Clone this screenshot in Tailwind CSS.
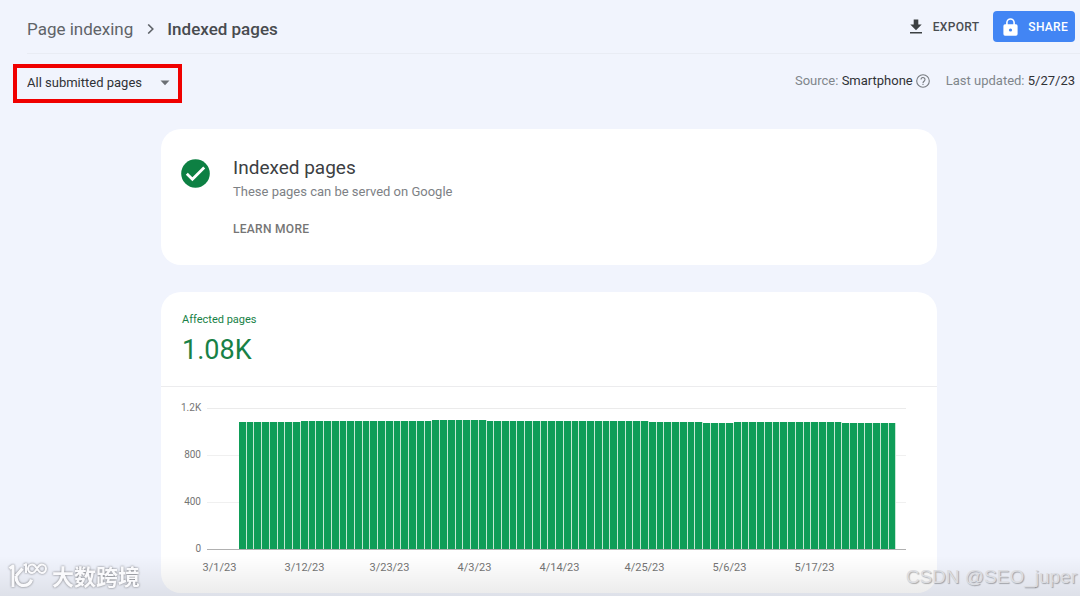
<!DOCTYPE html>
<html lang="en">
<head>
    <meta charset="UTF-8">
    <meta name="viewport" content="width=device-width, initial-scale=1.0">
    <title>Page indexing - Indexed pages</title>
    <script src="https://cdn.jsdelivr.net/npm/@tailwindcss/browser@4"></script>
</head>
<body class="relative min-h-screen overflow-x-hidden bg-[#f1f4fd] font-[Roboto,sans-serif] text-[#3c4043]">

    <!-- Header -->
    <header class="flex items-center justify-between h-[54px] ml-[27px] border-b border-[#e9ecf4] pr-[5px]">
        <nav aria-label="Breadcrumb" class="flex items-center pt-1 text-[17px] leading-6">
            <a href="#" class="text-[#5f6368]">Page indexing</a>
            <svg class="w-[10px] h-[10px] mx-3" viewBox="0 0 10 10" fill="none" stroke="#5f6368" stroke-width="1.6" aria-hidden="true"><path d="M3.200 0.5 7.800 5 3.200 9.5"/></svg>
            <span class="font-medium text-[#484b4f]">Indexed pages</span>
        </nav>

        <div class="flex items-center text-[12px] font-medium tracking-wide">
            <button type="button" class="flex items-center gap-[10px] mr-[14px] text-[#4a4d51]">
                <svg class="w-[14px] h-4" viewBox="0 0 13 16" fill="#3c4043" aria-hidden="true"><path d="M4.2 0.5h4.6v5h3.4L6.5 11.2 0.8 5.5h3.4zM0.5 13h12v1.6H0.5z"/></svg>
                EXPORT
            </button>
            <button type="button" class="flex items-center gap-[10px] h-[31px] pl-[10px] pr-[7px] text-white bg-[#4285f4] rounded-sm">
                <svg class="w-[15px] h-[18px]" viewBox="0 0 15 18" aria-hidden="true">
                    <path d="M3.9 7.5V4.6a3.6 3.6 0 0 1 7.2 0v2.9" fill="none" stroke="#fff" stroke-width="1.6"/>
                    <path d="M2 6.3h11a1.6 1.6 0 0 1 1.6 1.6v8.2a1.6 1.6 0 0 1-1.6 1.6H2a1.6 1.6 0 0 1-1.6-1.6V7.9A1.6 1.6 0 0 1 2 6.3z" fill="#fff"/>
                    <circle cx="7.5" cy="12" r="1.6" fill="#4285f4"/>
                </svg>
                SHARE
            </button>
        </div>
    </header>

    <!-- Filter bar -->
    <div class="flex items-start justify-between pt-[10px] pl-[13px] pr-[5px] text-[13px]">
        <div class="relative border-4 border-[#f00000]">
            <label for="pageFilter" hidden>Pages</label>
            <select id="pageFilter" class="block h-[31px] w-[161px] pl-[10px] pr-8 pb-[2px] appearance-none bg-transparent text-[#303236]">
                <option>All submitted pages</option>
                <option>All known pages</option>
            </select>
            <svg class="absolute right-2 top-3 w-[10px] h-[6px] pointer-events-none" viewBox="0 0 10 6" fill="#6b6f74" aria-hidden="true"><path d="M0.5 0.5h9L5 5.3z"/></svg>
        </div>
        <div class="flex items-center pt-[7px] text-[#80868b]">
            <span>Source: <span class="text-[#303236]">Smartphone</span></span>
            <svg class="w-[14px] h-[14px] ml-[3px] mr-4" viewBox="0 0 14 14" fill="none" stroke="#777b80" stroke-width="1.1" aria-hidden="true">
                <circle cx="7" cy="7" r="6.3"/>
                <path d="M5 5.5a2 2 0 1 1 3.3 1.5C7.5 7.7 7 8 7 8.9"/>
                <path d="M7 9.8v1.2"/>
            </svg>
            <span>Last updated: <span class="text-[#303236]">5/27/23</span></span>
        </div>
    </div>

    <main class="pt-[26px] pb-[2px] pl-[18px]">
        <div class="max-w-[776px] mx-auto space-y-[27px]">

            <!-- Status card -->
            <section class="flex items-start gap-[23px] h-[136px] pt-[26px] px-5 bg-white rounded-[20px]">
                <svg class="w-[29px] h-[29px] mt-1" viewBox="0 0 29 29" aria-hidden="true">
                    <circle cx="14.5" cy="14.5" r="14.3" fill="#0d8043"/>
                    <path d="M5.8 14.8l5.6 5.5L23.2 8.6" fill="none" stroke="#fff" stroke-width="2.8"/>
                </svg>
                <div>
                    <h1 class="text-[19px] leading-[26px]">Indexed pages</h1>
                    <p class="text-[13px] leading-[22px] text-[#7d8185]">These pages can be served on Google</p>
                    <a href="#" class="inline-block mt-4 text-[12px] leading-5 font-medium tracking-wide text-[#757575]">LEARN MORE</a>
                </div>
            </section>

            <!-- Chart card -->
            <section class="pb-[17px] bg-white rounded-[20px]">
                <div class="h-[95px] px-[21px] pt-5 border-b border-[#ececee] text-[#188146]">
                    <p class="text-[11px] leading-4">Affected pages</p>
                    <p class="pt-1 text-[27px] leading-9">1.08K</p>
                </div>

                <div class="relative pt-[14px] pl-5 pr-[31px]">
                    <div class="flex flex-col justify-between h-[155px] text-[10px] leading-[14px] text-[#757575]">
                        <div class="flex items-center gap-[6px]"><span class="w-5 text-right">1.2K</span><i class="flex-1 h-px bg-[#ebebeb]"></i></div>
                        <div class="flex items-center gap-[6px]"><span class="w-5 text-right">800</span><i class="flex-1 h-px bg-[#f0f0f0]"></i></div>
                        <div class="flex items-center gap-[6px]"><span class="w-5 text-right">400</span><i class="flex-1 h-px bg-[#f0f0f0]"></i></div>
                        <div class="flex items-center gap-[6px]"><span class="w-5 text-right">0</span><i class="flex-1 h-px bg-[#b0b0b0]"></i></div>
                    </div>
                    <div id="bars" class="absolute flex items-end bottom-[7px] left-[78px] right-[41px] h-[141px]"></div>
                </div>

                <div class="grid grid-cols-8 ml-4 mr-20 pt-1 text-center text-[11px] leading-4 text-[#757575]">
                    <span>3/1/23</span>
                    <span>3/12/23</span>
                    <span>3/23/23</span>
                    <span>4/3/23</span>
                    <span>4/14/23</span>
                    <span>4/25/23</span>
                    <span>5/6/23</span>
                    <span>5/17/23</span>
                </div>
            </section>
        </div>
    </main>

    <!-- Bottom shade and watermarks -->
    <div class="absolute inset-x-0 bottom-0 h-10 pointer-events-none bg-linear-to-t from-black/8 to-transparent"></div>
    <div class="absolute bottom-[7px] left-2 flex items-center gap-1 text-[#fafafc] pointer-events-none drop-shadow-[0_0_1px_rgba(0,0,0,0.5)]">
        <svg class="w-10 h-7" viewBox="0 0 40 28" fill="none" stroke="#fafafc" stroke-linejoin="round" aria-hidden="true">
            <path d="M1.5 7.500 5 5v21" stroke-width="3"/>
            <path d="M14.500 7.500 8 15M8 15c0 6 3 9.500 7.500 9.500 4 0 7-2 8-6" stroke-width="3.200"/>
            <path d="M15.500 4.500 18 3v9" stroke-width="2"/>
            <path d="M29 7.500C27.500 5 26 3.500 24.200 3.500a4.200 4.200 0 0 0 0 8.400C26 11.900 27.500 10 29 7.500s3-4 4.800-4a4.200 4.200 0 0 1 0 8.400C32 11.900 30.500 10 29 7.500z" stroke-width="2"/>
        </svg>
        <span class="font-['Noto_Sans_CJK_SC',sans-serif] text-[22px] leading-7 font-bold" lang="zh">大数跨境</span>
    </div>
    <div class="absolute bottom-[5px] right-[3px] font-['Liberation_Sans',sans-serif] text-[19px] leading-7 text-[#dcdde1] pointer-events-none text-shadow-[1px_1px_1px_rgba(0,0,0,0.3)]">CSDN @SEO_juper</div>

    <script>
        // [number of days, indexed pages], 3/4/23 to 5/27/23
        const runs = [[8, 1081], [17, 1090], [7, 1098], [21, 1090], [7, 1081], [4, 1073], [14, 1081], [7, 1073]];
        const bars = document.getElementById('bars');

        runs.forEach(([days, pages]) => {
            for (let i = 0; i < days; i++) {
                const bar = document.createElement('div');
                bar.className = 'flex-1 bg-[#0f9d58] border-r border-[#c4e8d4]';
                bar.style.height = (pages / 1200 * 100) + '%';
                bars.appendChild(bar);
            }
        });
    </script>
</body>
</html>
